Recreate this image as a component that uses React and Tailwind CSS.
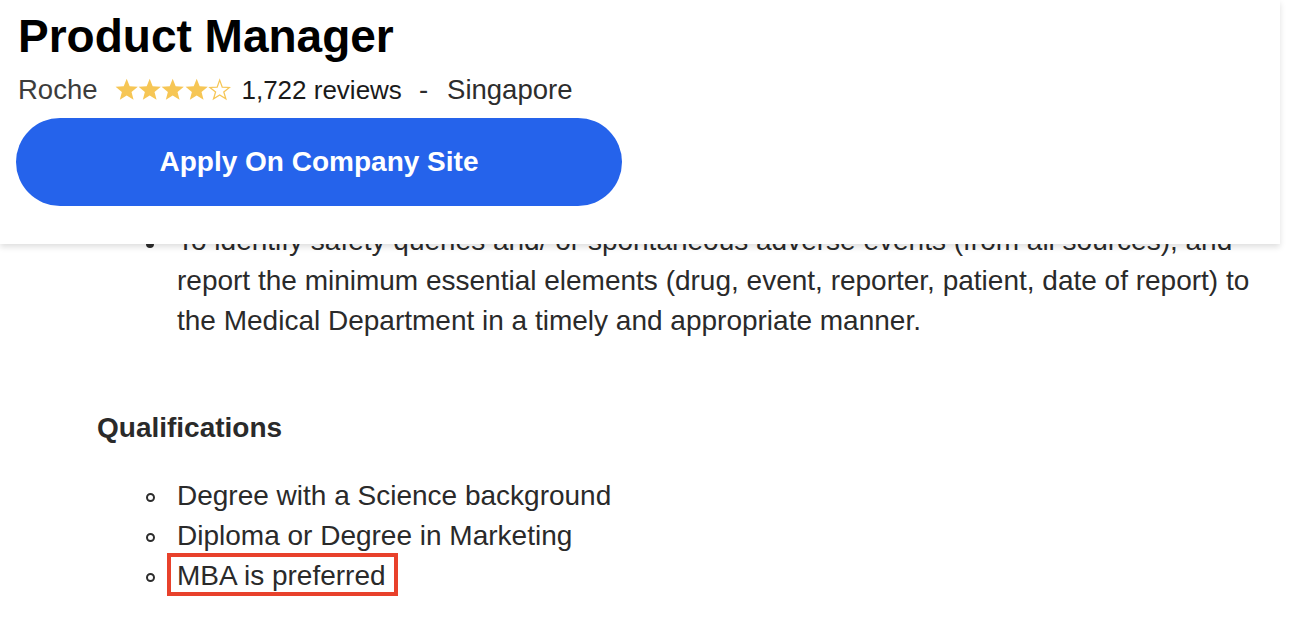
import React from "react";

const STAR =
  "12,0.7 15.06,8.49 23.41,8.99 16.95,14.31 19.05,22.41 12,17.9 4.95,22.41 7.05,14.31 0.59,8.99 8.94,8.49";

function Star({ filled }) {
  return (
    <svg viewBox="0 0 24 24" className="w-[23.4px] h-[23.4px] shrink-0">
      {filled ? (
        <polygon points={STAR} fill="#f6c655" />
      ) : (
        <polygon
          points="12,2.2 14.6,9.4 22,9.7 16.2,14.4 18.3,21.4 12,17.4 5.7,21.4 7.8,14.4 2,9.7 9.4,9.4"
          fill="none"
          stroke="#f6c655"
          strokeWidth="1.3"
          strokeLinejoin="miter"
        />
      )}
    </svg>
  );
}

function Bullet({ type }) {
  return (
    <span className="w-[80px] shrink-0 h-[40px] flex items-center pl-[49px]">
      {type === "disc" ? (
        <span className="mt-[6px] w-[8px] h-[8px] rounded-full bg-[#2d2d2d]" />
      ) : (
        <span className="mt-[2px] w-[9px] h-[9px] rounded-full border-2 border-[#2d2d2d]" />
      )}
    </span>
  );
}

function Item({ type, children }) {
  return (
    <li className="flex text-[28px] leading-[40px]">
      <Bullet type={type} />
      <span className="flex-1">{children}</span>
    </li>
  );
}

export default function App() {
  return (
    <div className="relative w-[1314px] h-[638px] overflow-hidden bg-white text-[#2a2a2a] font-['Liberation_Sans',Arial,sans-serif]">
      <main className="w-[1280px] pt-[221px] pl-[97px]">
        <ul>
          <Item type="disc">
            To identify safety queries and/ or spontaneous adverse events (from all sources), and report the
            minimum essential elements (drug, event, reporter, patient, date of report) to the Medical Department
            in a timely and appropriate manner.
          </Item>
        </ul>

        <h3 className="mt-[67px] text-[28px] leading-[40px] font-bold">Qualifications</h3>

        <ul className="mt-[28px]">
          <Item type="circle">Degree with a Science background</Item>
          <Item type="circle">Diploma or Degree in Marketing</Item>
          <Item type="circle">
            <span className="relative inline-block">
              MBA is preferred
              <span className="absolute -left-[10px] -right-[12px] -top-[3px] bottom-0 border-4 border-[#e8412b]" />
            </span>
          </Item>
        </ul>
      </main>

      <header className="absolute left-0 top-0 w-[1280px] h-[244px] bg-white shadow-[0_3px_6px_rgba(0,0,0,0.13)]">
        <h1 className="pt-[13px] pl-[18px] text-[46px] leading-[46px] font-bold text-black">Product Manager</h1>
        <div className="mt-[11px] pl-[18px] flex items-center h-[40px] text-[27.5px] leading-[40px]">
          <span className="text-[#3c3c3c]">Roche</span>
          <div className="ml-[17px] flex items-center">
            <Star filled />
            <Star filled />
            <Star filled />
            <Star filled />
            <Star />
          </div>
          <span className="ml-[10px] text-[26px] text-[#1a1a1a]">1,722 reviews</span>
          <span className="ml-[17px] text-[#2d2d2d]">-</span>
          <span className="ml-[19px] text-[#2d2d2d]">Singapore</span>
        </div>
        <button className="mt-[8px] ml-[16px] w-[606px] h-[88px] rounded-full bg-[#2563eb] text-white text-[28px] font-bold">
          Apply On Company Site
        </button>
      </header>
    </div>
  );
}
